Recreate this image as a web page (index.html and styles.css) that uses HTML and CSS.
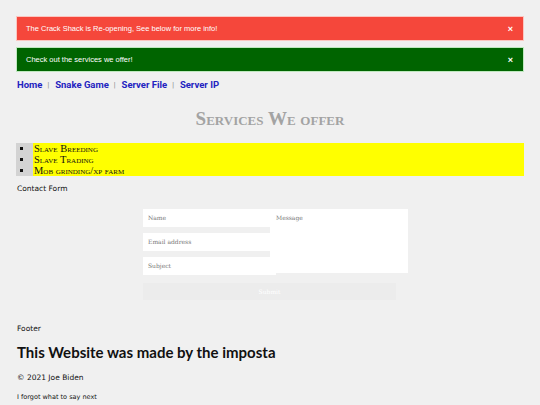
FILE: index.html
```html
<!DOCTYPE html>
<html>
<head>
<meta charset="utf-8">
<link rel="stylesheet" href="styles.css">
</head>
<body>
<div class="alert alert-red"><span>The Crack Shack is Re-opening, See below for more info!</span><span class="close">×</span></div>
<div class="alert alert-green"><span>Check out the services we offer!</span><span class="close">×</span></div>
<nav class="nav">
  <a href="#">Home</a><span class="sep">|</span>
  <a href="#">Snake Game</a><span class="sep">|</span>
  <a href="#">Server File</a><span class="sep">|</span>
  <a href="#">Server IP</a>
</nav>
<h1 class="title">Services We offer</h1>
<ul class="services">
  <li>Slave Breeding</li>
  <li>Slave Trading</li>
  <li>Mob grinding/xp farm</li>
</ul>
<p class="label">Contact Form</p>
<form class="form">
  <div class="fields">
    <div class="left">
      <div class="input">Name</div>
      <div class="input">Email address</div>
      <div class="input subject">Subject</div>
    </div>
    <div class="message">Message</div>
  </div>
  <div class="submit">Submit</div>
</form>
<footer class="footer">
  <p class="label">Footer</p>
  <h2 class="made">This Website was made by the imposta</h2>
  <p class="copy">© 2021 Joe Biden</p>
  <p class="forgot">I forgot what to say next</p>
</footer>
</body>
</html>
```
FILE: styles.css
```css
html, body { margin: 0; padding: 0; }
body {
  background: #f0f0f0;
  padding: 16px 16px 0 16px;
  font-family: "Liberation Sans", Arial, sans-serif;
  color: #111;
}
.alert {
  height: 25px;
  box-sizing: border-box;
  display: flex;
  align-items: center;
  justify-content: space-between;
  padding: 0 9px 0 9px;
  color: #fff;
  font-size: 7.5px;
  margin-bottom: 6px;
}
.alert-red { background: #f5473b; border: 1px solid #fbc6c0; }
.alert-green { background: #006400; border: 1px solid #bfe8bf; }
.close { font-weight: bold; font-size: 9px; margin-right: 1px; }
.nav {
  margin-top: 6px;
  padding-left: 1px;
  display: flex;
  align-items: center;
  font-family: Roboto, "Liberation Sans", sans-serif;
  font-size: 9.5px;
  font-weight: 700;
  height: 12px;
}
.nav a { color: #2323c0; text-decoration: none; }
.sep { color: #777; font-size: 7px; margin: 1px 6px 0 5px; font-weight: normal; }
.title {
  margin: 17px 0 0 0;
  text-align: center;
  font-family: "Liberation Serif", serif;
  font-variant: small-caps;
  font-size: 19px;
  font-weight: bold;
  color: #a3a3a3;
  line-height: 24px;
}
.services {
  margin: 12px 0 0 0;
  padding: 0 0 0 17px;
  background: #d3d3d3;
  list-style: square;
  font-family: "Liberation Serif", serif;
  font-variant: small-caps;
  font-size: 10.5px;
  line-height: 11px;
}
.services li { background: #ffff00; padding-left: 1px; }
.label {
  margin: 8px 0 0 0;
  padding-left: 1px;
  font-family: "DejaVu Sans", sans-serif;
  font-size: 7.5px;
  line-height: 10px;
}
.form {
  margin: 15px 0 0 127px;
  width: 265px;
}
.fields { display: flex; }
.left { display: flex; flex-direction: column; gap: 6px; width: 127px; }
.input, .message {
  background: #fff;
  font-family: "DejaVu Serif", serif;
  font-size: 6px;
  color: #777;
  box-sizing: border-box;
}
.input { height: 18px; padding: 5px 5px 0 5px; width: 127px; }
.subject { width: 133px; position: relative; z-index: 1; }
.message { width: 138px; height: 64px; padding: 5px 6px; }
.submit {
  margin-top: 8px;
  width: 253px;
  height: 17px;
  background: #ececec;
  color: #fff;
  font-family: "DejaVu Serif", serif;
  font-size: 6px;
  display: flex;
  align-items: center;
  justify-content: center;
}
.footer { margin-top: 24px; }
.footer .label { margin: 0; }
.made {
  margin: 9px 0 0 0;
  padding-left: 1px;
  font-family: Lato, "DejaVu Sans", sans-serif;
  font-size: 15px;
  font-weight: bold;
  line-height: 18px;
  color: #111;
}
.copy {
  margin: 12px 0 0 0;
  padding-left: 1px;
  font-family: "DejaVu Sans", sans-serif;
  font-size: 7.5px;
  line-height: 10px;
}
.forgot {
  margin: 10px 0 0 0;
  padding-left: 1px;
  font-family: "DejaVu Sans", sans-serif;
  font-size: 6.5px;
  line-height: 9px;
}
```
